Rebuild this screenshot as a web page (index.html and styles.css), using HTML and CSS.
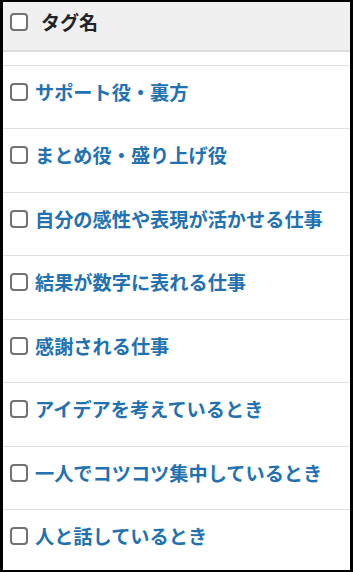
FILE: index.html
```html
<!DOCTYPE html>
<html lang="ja">
<head>
<meta charset="utf-8">
<title>タグ</title>
<link rel="stylesheet" href="styles.css">
</head>
<body>
<div class="frame">
  <div class="thead">
    <span class="cb" role="checkbox" aria-checked="false"></span>
    <span class="th-label">タグ名</span>
  </div>
  <div class="spacer"></div>
  <ul class="rows">
    <li class="row"><span class="cb" role="checkbox" aria-checked="false"></span><a class="name" href="#">サポート役・裏方</a></li>
    <li class="row"><span class="cb" role="checkbox" aria-checked="false"></span><a class="name" href="#">まとめ役・盛り上げ役</a></li>
    <li class="row"><span class="cb" role="checkbox" aria-checked="false"></span><a class="name" href="#">自分の感性や表現が活かせる仕事</a></li>
    <li class="row"><span class="cb" role="checkbox" aria-checked="false"></span><a class="name" href="#">結果が数字に表れる仕事</a></li>
    <li class="row"><span class="cb" role="checkbox" aria-checked="false"></span><a class="name" href="#">感謝される仕事</a></li>
    <li class="row"><span class="cb" role="checkbox" aria-checked="false"></span><a class="name" href="#">アイデアを考えているとき</a></li>
    <li class="row"><span class="cb" role="checkbox" aria-checked="false"></span><a class="name" href="#">一人でコツコツ集中しているとき</a></li>
    <li class="row"><span class="cb" role="checkbox" aria-checked="false"></span><a class="name" href="#">人と話しているとき</a></li>
  </ul>
</div>
</body>
</html>
```

FILE: styles.css
```css
html, body {
  margin: 0;
  padding: 0;
  background: #000;
}
.frame {
  box-sizing: border-box;
  width: 353px;
  height: 572px;
  border-style: solid;
  border-color: #000;
  border-width: 2px 3px 2px 3px;
  background: #fff;
  overflow: hidden;
  font-family: "Noto Sans CJK JP", "Noto Sans", sans-serif;
}
.cb {
  display: block;
  box-sizing: border-box;
  width: 18px;
  height: 18px;
  flex: none;
  border: 2px solid #727272;
  border-radius: 4px;
  background: #fff;
}
.thead {
  box-sizing: border-box;
  height: 50px;
  background: #f0f0f1;
  border-bottom: 2px solid #dcdcde;
  display: flex;
  align-items: flex-start;
  padding: 11px 0 0 7px;
  gap: 13px;
}
.th-label {
  font-size: 19px;
  line-height: 19px;
  font-weight: 700;
  color: #1d2327;
  margin-top: -1px;
}
.spacer {
  height: 13px;
  border-bottom: 1px solid #e0e0e0;
}
.rows {
  list-style: none;
  margin: 0;
  padding: 0;
}
.row {
  box-sizing: border-box;
  height: 63.43px;
  border-bottom: 1px solid #e0e0e0;
  display: flex;
  align-items: flex-start;
  padding: 17px 0 0 7px;
  gap: 7px;
}
.name {
  font-size: 19.2px;
  line-height: 19px;
  font-weight: 700;
  color: #2271b1;
  text-decoration: none;
  white-space: nowrap;
  margin-top: 0;
}
```
